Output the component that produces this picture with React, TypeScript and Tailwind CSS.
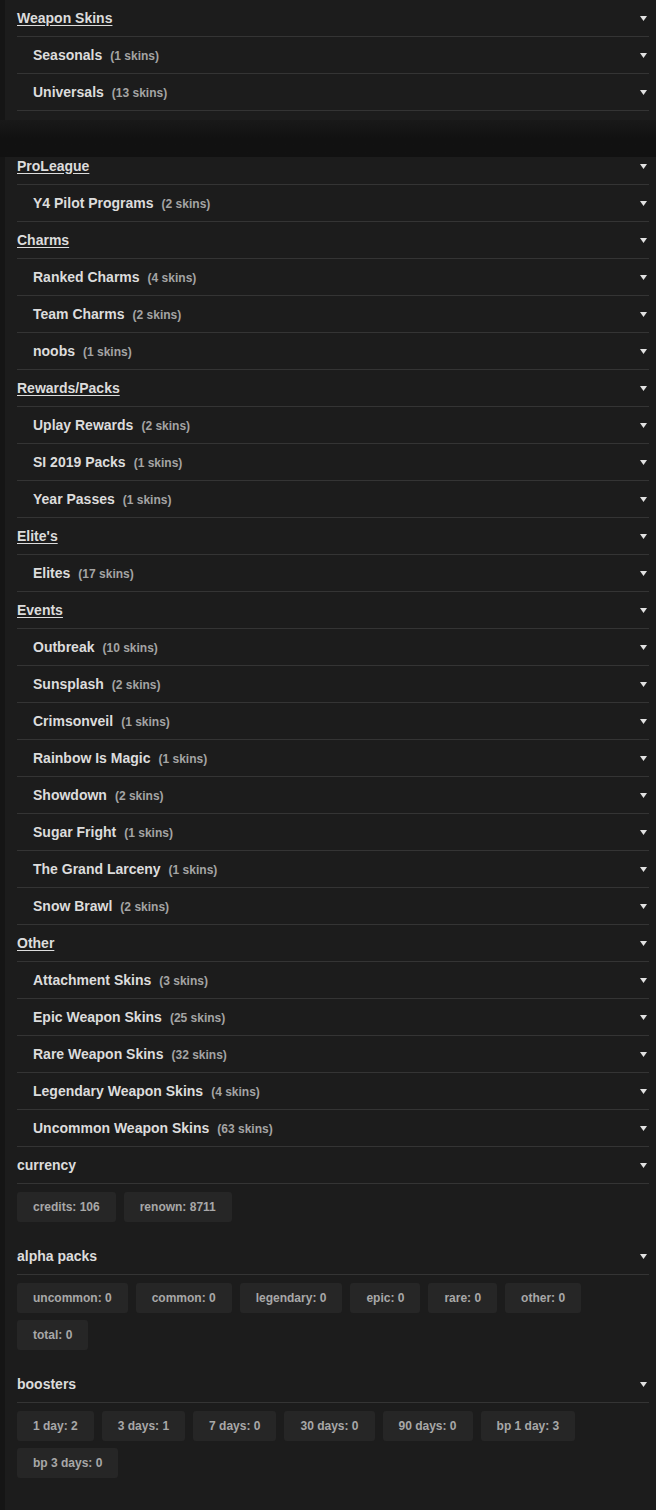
import React from 'react';

type Sub = { name: string; count: number };
type Group = { title: string; subs: Sub[] };

const topGroup: Group = {
  title: 'Weapon Skins',
  subs: [
    { name: 'Seasonals', count: 1 },
    { name: 'Universals', count: 13 },
  ],
};

const groups: Group[] = [
  { title: 'ProLeague', subs: [{ name: 'Y4 Pilot Programs', count: 2 }] },
  {
    title: 'Charms',
    subs: [
      { name: 'Ranked Charms', count: 4 },
      { name: 'Team Charms', count: 2 },
      { name: 'noobs', count: 1 },
    ],
  },
  {
    title: 'Rewards/Packs',
    subs: [
      { name: 'Uplay Rewards', count: 2 },
      { name: 'SI 2019 Packs', count: 1 },
      { name: 'Year Passes', count: 1 },
    ],
  },
  { title: "Elite's", subs: [{ name: 'Elites', count: 17 }] },
  {
    title: 'Events',
    subs: [
      { name: 'Outbreak', count: 10 },
      { name: 'Sunsplash', count: 2 },
      { name: 'Crimsonveil', count: 1 },
      { name: 'Rainbow Is Magic', count: 1 },
      { name: 'Showdown', count: 2 },
      { name: 'Sugar Fright', count: 1 },
      { name: 'The Grand Larceny', count: 1 },
      { name: 'Snow Brawl', count: 2 },
    ],
  },
  {
    title: 'Other',
    subs: [
      { name: 'Attachment Skins', count: 3 },
      { name: 'Epic Weapon Skins', count: 25 },
      { name: 'Rare Weapon Skins', count: 32 },
      { name: 'Legendary Weapon Skins', count: 4 },
      { name: 'Uncommon Weapon Skins', count: 63 },
    ],
  },
];

const stats: { title: string; items: string[] }[] = [
  { title: 'currency', items: ['credits: 106', 'renown: 8711'] },
  {
    title: 'alpha packs',
    items: ['uncommon: 0', 'common: 0', 'legendary: 0', 'epic: 0', 'rare: 0', 'other: 0', 'total: 0'],
  },
  {
    title: 'boosters',
    items: ['1 day: 2', '3 days: 1', '7 days: 0', '30 days: 0', '90 days: 0', 'bp 1 day: 3', 'bp 3 days: 0'],
  },
];

const Caret = () => (
  <svg width="7" height="5" viewBox="0 0 7 5" className="shrink-0">
    <polygon points="0,0 7,0 3.5,5" fill="#e2e2e2" />
  </svg>
);

const Row: React.FC<{ children: React.ReactNode; sub?: boolean }> = ({ children, sub }) => (
  <div
    className={`flex h-[37px] items-center justify-between border-b border-[#343434] pr-[2px] ${
      sub ? 'pl-4' : ''
    }`}
  >
    <div className="flex items-baseline">{children}</div>
    <Caret />
  </div>
);

const GroupBlock: React.FC<{ group: Group }> = ({ group }) => (
  <>
    <Row>
      <span className="text-[14px] font-bold text-[#dcdcdc] underline underline-offset-2">{group.title}</span>
    </Row>
    {group.subs.map((s) => (
      <Row key={s.name} sub>
        <span className="text-[14px] font-bold text-[#dcdcdc]">{s.name}</span>
        <span className="ml-2 text-[12px] font-bold text-[#a4a4a4]">({s.count} skins)</span>
      </Row>
    ))}
  </>
);

export default function App() {
  return (
    <div className="min-h-[1510px] bg-[#151515] font-['Liberation_Sans',Arial,sans-serif]">
      <div className="ml-[5px] bg-[#1c1c1c] pb-[9px] pl-3 pr-[7px]">
        <GroupBlock group={topGroup} />
      </div>

      <div className="h-[37px] bg-gradient-to-b from-[#191919] via-[#111111] to-[#111111]" />

      <div className="ml-[5px] h-[1353px] overflow-hidden bg-[#1c1c1c] pl-3 pr-[7px]">
        <div className="-mt-[9px]">
          {groups.map((g) => (
            <GroupBlock key={g.title} group={g} />
          ))}

          {stats.map((st, i) => (
            <div key={st.title} className={i > 0 ? 'mt-4' : ''}>
              <Row>
                <span className="text-[14px] font-bold text-[#dcdcdc]">{st.title}</span>
              </Row>
              <div className="mt-2 flex flex-wrap gap-x-2 gap-y-[7px]">
                {st.items.map((it) => (
                  <div
                    key={it}
                    className="flex h-[30px] items-center rounded-[3px] bg-[#262626] px-4 text-[12px] font-bold text-[#a8a8a8]"
                  >
                    {it}
                  </div>
                ))}
              </div>
            </div>
          ))}
        </div>
      </div>
    </div>
  );
}
